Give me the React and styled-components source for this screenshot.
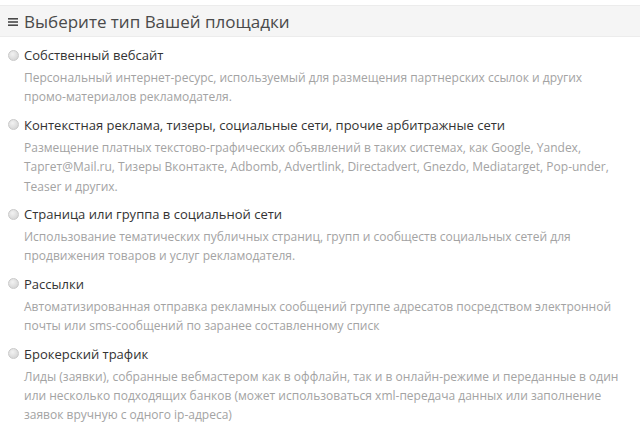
import React from "react";
import styled, { createGlobalStyle } from "styled-components";

const Global = createGlobalStyle`
  html, body { margin: 0; padding: 0; background: #fff; }
  body { font-family: "Open Sans", "Noto Sans", sans-serif; }
`;

const Page = styled.div`
  width: 640px;
  height: 443px;
  overflow: hidden;
  background: #fff;
`;

const Header = styled.div`
  display: flex;
  align-items: center;
  gap: 6px;
  height: 30px;
  margin-top: 5px;
  padding: 0 8px;
  background: #f5f5f5;
  border-top: 1px solid #ececec;
  border-bottom: 1px solid #ececec;
  color: #4a4a4a;
  font-size: 17px;
`;

const MenuIcon = styled.svg`
  flex: none;
  width: 10px;
  height: 10px;
  margin-top: 1px;
`;

const List = styled.div`
  display: flex;
  flex-direction: column;
  gap: 8px;
  padding: 8px 20px 0 8px;
`;

const Item = styled.label`
  display: grid;
  grid-template-columns: 11px 1fr;
  column-gap: 5px;
  row-gap: 3px;
  cursor: pointer;
`;

const Radio = styled.span`
  align-self: center;
  width: 11px;
  height: 11px;
  box-sizing: border-box;
  border-radius: 50%;
  border: 1px solid #c9c9c9;
  background: radial-gradient(circle at 40% 35%, #f2f2f2 0%, #d9d9d9 70%, #cfcfcf 100%);
`;

const Title = styled.span`
  font-size: 13px;
  line-height: 20px;
  color: #333;
`;

const Desc = styled.p`
  grid-column: 2;
  margin: 0;
  font-size: 12px;
  line-height: 19.4px;
  color: #a3a3a3;
`;

const options = [
  {
    title: "Собственный вебсайт",
    desc: "Персональный интернет-ресурс, используемый для размещения партнерских ссылок и других промо-материалов рекламодателя.",
  },
  {
    title: "Контекстная реклама, тизеры, социальные сети, прочие арбитражные сети",
    desc: "Размещение платных текстово-графических объявлений в таких системах, как Google, Yandex, Таргет@Mail.ru, Тизеры Вконтакте, Adbomb, Advertlink, Directadvert, Gnezdo, Mediatarget, Pop-under, Teaser и других.",
  },
  {
    title: "Страница или группа в социальной сети",
    desc: "Использование тематических публичных страниц, групп и сообществ социальных сетей для продвижения товаров и услуг рекламодателя.",
  },
  {
    title: "Рассылки",
    desc: "Автоматизированная отправка рекламных сообщений группе адресатов посредством электронной почты или sms-сообщений по заранее составленному списк",
  },
  {
    title: "Брокерский трафик",
    desc: "Лиды (заявки), собранные вебмастером как в оффлайн, так и в онлайн-режиме и переданные в один или несколько подходящих банков (может использоваться xml-передача данных или заполнение заявок вручную с одного ip-адреса)",
  },
];

export default function App() {
  return (
    <Page>
      <Global />
      <Header>
        <MenuIcon viewBox="0 0 10 10">
          <rect x="0" y="1" width="10" height="1.6" fill="#4a4a4a" />
          <rect x="0" y="4.2" width="10" height="1.6" fill="#4a4a4a" />
          <rect x="0" y="7.4" width="10" height="1.6" fill="#4a4a4a" />
        </MenuIcon>
        Выберите тип Вашей площадки
      </Header>
      <List>
        {options.map((o) => (
          <Item key={o.title}>
            <Radio />
            <Title>{o.title}</Title>
            <Desc>{o.desc}</Desc>
          </Item>
        ))}
      </List>
    </Page>
  );
}
